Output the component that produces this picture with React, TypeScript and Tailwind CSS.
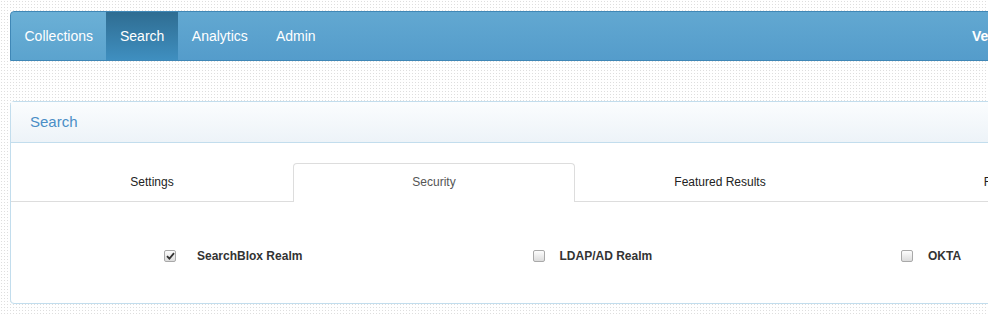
import React from 'react'

const navItems = ['Collections', 'Search', 'Analytics', 'Admin']
const tabs = [
    { label: 'Settings', w: 'w-[282px]' },
    { label: 'Security', w: 'w-[282px]' },
    { label: 'Featured Results', w: 'w-[290px]' },
    { label: 'Filters', w: 'w-[270px]' },
]
const realms = [
    { label: 'SearchBlox Realm', checked: true, gap: 'ml-[21px]' },
    { label: 'LDAP/AD Realm', checked: false, gap: 'ml-[15px]' },
    { label: 'OKTA', checked: false, gap: 'ml-[15px]' },
]

function Checkbox({ checked }: { checked: boolean }) {
    return (
        <span className="flex h-[12px] w-[12px] shrink-0 items-center justify-center rounded-[2px] border border-[#a9a9a9] bg-gradient-to-b from-[#fdfdfd] to-[#dcdcdc]">
            {checked && (
                <svg width="9" height="8" viewBox="0 0 9 8">
                    <path d="M1 4.2 L3.4 6.6 L8 1.2" fill="none" stroke="#333" strokeWidth="1.8" />
                </svg>
            )}
        </span>
    )
}

export default function App() {
    return (
        <div className="h-[315px] w-[988px] overflow-hidden bg-white bg-[radial-gradient(#dedede_0.6px,transparent_0.8px)] bg-[size:3px_3px] font-['Liberation_Sans',Arial,sans-serif]">
            <div className="w-[1200px] pl-[10px] pt-[11px]">
                <div className="flex h-[50px] items-stretch rounded-tl-[4px] border border-[#3f87b6] bg-gradient-to-b from-[#62a8d1] to-[#549ccb] text-[14px] text-white">
                    <div className="flex w-[961px] shrink-0">
                        {navItems.map((item) => (
                            <div
                                key={item}
                                className={
                                    item === 'Search'
                                        ? 'flex items-center bg-gradient-to-b from-[#2f6d92] to-[#3f8fc0] px-[13.5px]'
                                        : item === 'Collections'
                                          ? 'flex items-center rounded-tl-[4px] bg-gradient-to-b from-[#6bb0d6] to-[#5ba3ce] px-[13.5px]'
                                          : 'flex items-center px-[14px]'
                                }
                            >
                                {item}
                            </div>
                        ))}
                    </div>
                    <div className="flex items-center text-[14px] font-bold">Version 9.2</div>
                </div>

                <div className="mt-[40px] rounded-[4px] border border-[#c2dded] bg-white">
                    <div className="flex h-[41px] items-center border-b border-[#c2dded] bg-gradient-to-b from-[#fbfdfe] to-[#edf3f8] px-[19px] text-[15px] text-[#4a8ec6]">
                        Search
                    </div>
                    <div className="h-[160px] pt-[20px]">
                        <div className="flex border-b border-[#dddddd]">
                            {tabs.map((tab) =>
                                tab.label === 'Security' ? (
                                    <div
                                        key={tab.label}
                                        className={`-mb-px flex h-[39px] ${tab.w} items-center justify-center rounded-t-[4px] border border-b-0 border-[#dddddd] bg-white pb-[2px] text-[12px] text-[#555]`}
                                    >
                                        {tab.label}
                                    </div>
                                ) : (
                                    <div
                                        key={tab.label}
                                        className={`flex h-[38px] ${tab.w} shrink-0 items-center justify-center text-[12px] text-[#222]`}
                                    >
                                        {tab.label}
                                    </div>
                                ),
                            )}
                        </div>
                        <div className="mt-[45px] flex">
                            {realms.map((r) => (
                                <div key={r.label} className="flex w-[368.5px] items-center pl-[153px]">
                                    <Checkbox checked={r.checked} />
                                    <span className={`${r.gap} text-[12px] font-bold text-[#333]`}>{r.label}</span>
                                </div>
                            ))}
                        </div>
                    </div>
                </div>
            </div>
        </div>
    )
}
